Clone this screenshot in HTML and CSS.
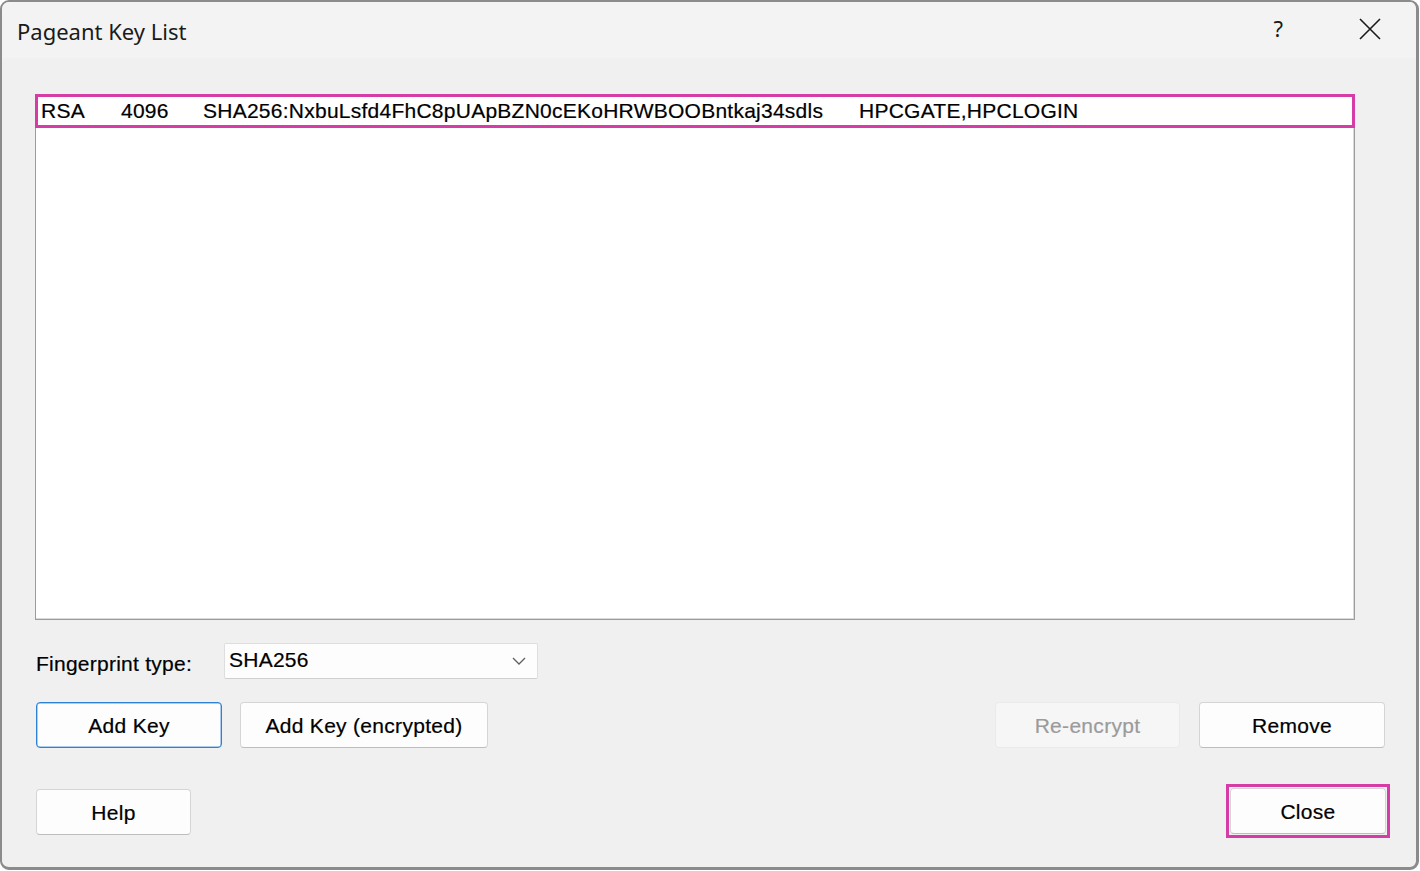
FILE: index.html
```html
<!DOCTYPE html>
<html lang="en">
<head>
    <meta charset="UTF-8">
    <meta name="viewport" content="width=device-width, initial-scale=1.0">
    <title>Pageant Key List</title>
    <link rel="stylesheet" href="styles.css">
</head>
<body>
    <div class="window">
        <div class="title-bar">
            <span class="title">Pageant Key List</span>
            <span class="title-help">?</span>
            <span class="title-close">
                <svg width="22" height="22" viewBox="0 0 22 22">
                    <path d="M1 1 L21 21 M21 1 L1 21" stroke="#1a1a1a" stroke-width="1.6" fill="none"/>
                </svg>
            </span>
        </div>
        <div class="content">
            <div class="key-list">
                <div class="key-row selected">
                    <span class="col-type">RSA</span>
                    <span class="col-bits">4096</span>
                    <span class="col-fp">SHA256:NxbuLsfd4FhC8pUApBZN0cEKoHRWBOOBntkaj34sdls</span>
                    <span class="col-comment">HPCGATE,HPCLOGIN</span>
                </div>
            </div>

            <div class="fp-row">
                <span class="fp-label">Fingerprint type:</span>
                <div class="combo">
                    <span>SHA256</span>
                    <svg width="14" height="8" viewBox="0 0 14 8">
                        <path d="M1 1 L7 7 L13 1" stroke="#5f5f5f" stroke-width="1.3" fill="none"/>
                    </svg>
                </div>
            </div>

            <div class="button-row">
                <div class="group">
                    <button class="btn btn-default add-key">Add Key</button>
                    <button class="btn add-enc">Add Key (encrypted)</button>
                </div>
                <div class="group">
                    <button class="btn btn-disabled reenc">Re-encrypt</button>
                    <button class="btn remove">Remove</button>
                </div>
            </div>

            <div class="button-row bottom-row">
                <button class="btn help">Help</button>
                <div class="focus-ring">
                    <button class="btn close">Close</button>
                </div>
            </div>
        </div>
    </div>
</body>
</html>
```

FILE: styles.css
```css
body{
    margin: 0;
    background-color: #ffffff;
    font-family: "Liberation Sans", Arial, sans-serif;
}
.window{
    box-sizing: border-box;
    width: 1419px;
    height: 870px;
    margin: 0;
    border: 2px solid #8b8b8b;
    border-right-width: 3px;
    border-bottom-width: 3px;
    border-radius: 9px;
    background-color: #f0f0f0;
    overflow: hidden;
}
.title-bar{
    height: 56px;
    display: flex;
    align-items: center;
    background-color: #f3f3f3;
    padding-left: 15px;
}
.title{
    flex: 1;
    font-family: "Noto Sans", sans-serif;
    font-size: 22px;
    color: #1a1a1a;
    padding-top: 1px;
}
.title-help{
    font-family: "Noto Sans", sans-serif;
    font-size: 22px;
    color: #1a1a1a;
    margin-right: 76px;
    padding-bottom: 4px;
}
.title-close{
    display: flex;
    margin-right: 35px;
    padding-bottom: 2px;
}
.content{
    padding: 36px 0 0 33px;
}
.key-list{
    box-sizing: border-box;
    width: 1320px;
    height: 526px;
    background-color: #ffffff;
    border: 1px solid #9c9c9c;
    box-shadow: inset -1px -1px 0 #dadada;
}
.key-row{
    box-sizing: border-box;
    height: 34px;
    margin: -1px -1px 0 -1px;
    display: flex;
    align-items: center;
    font-size: 21px;
    color: #000000;
    padding-left: 3px;
    letter-spacing: 0.25px;
    -webkit-text-stroke: 0.2px #000000;
}
.key-row.selected{
    border: 3px solid #d63ca6;
}
.col-type{ width: 80px; }
.col-bits{ width: 82px; }
.col-fp{ width: 656px; }
.fp-row{
    display: flex;
    align-items: center;
    margin-top: 23px;
}
.fp-label{
    width: 188px;
    font-size: 21px;
    color: #000000;
    padding-left: 1px;
    padding-top: 5px;
    letter-spacing: 0.25px;
    -webkit-text-stroke: 0.2px #000000;
}
.combo{
    box-sizing: border-box;
    width: 314px;
    height: 36px;
    display: flex;
    align-items: center;
    justify-content: space-between;
    padding: 0 11px 0 4px;
    background-color: #fdfdfd;
    border: 1px solid #dedede;
    border-bottom-color: #cfcfcf;
    border-radius: 2px;
    font-size: 21px;
    color: #000000;
    letter-spacing: 0.25px;
    -webkit-text-stroke: 0.2px #000000;
}
.combo span{
    padding-bottom: 2px;
}
.button-row{
    width: 1349px;
    display: flex;
    justify-content: space-between;
    align-items: center;
    margin-top: 23px;
    padding-left: 1px;
}
.group{
    display: flex;
    gap: 18px;
}
.btn{
    box-sizing: border-box;
    height: 46px;
    background-color: #fdfdfd;
    border: 1px solid #d5d5d5;
    border-bottom-color: #bdbdbd;
    border-radius: 4px;
    font-family: "Liberation Sans", Arial, sans-serif;
    font-size: 21px;
    color: #000000;
    letter-spacing: 0.3px;
    -webkit-text-stroke: 0.2px #000000;
    padding: 2px 0 0 0;
}
.btn-default{
    border: 1px solid #2e82d6;
    box-shadow: inset 0 0 0 0.5px #5a9de0;
}
.btn-disabled{
    background-color: #f6f6f6;
    border: 1px solid #eaeaea;
    color: #9b9b9b;
    -webkit-text-stroke: 0.2px #9b9b9b;
}
.add-key{ width: 186px; }
.add-enc{ width: 248px; }
.reenc{ width: 185px; margin-right: 1px; }
.remove{ width: 186px; }
.bottom-row{
    margin-top: 36px;
    width: 1354px;
}
.help{ width: 155px; margin-top: 2px; }
.focus-ring{
    border: 3px solid #d63ca6;
    padding: 1px;
    display: flex;
}
.close{ width: 156px; }
```
